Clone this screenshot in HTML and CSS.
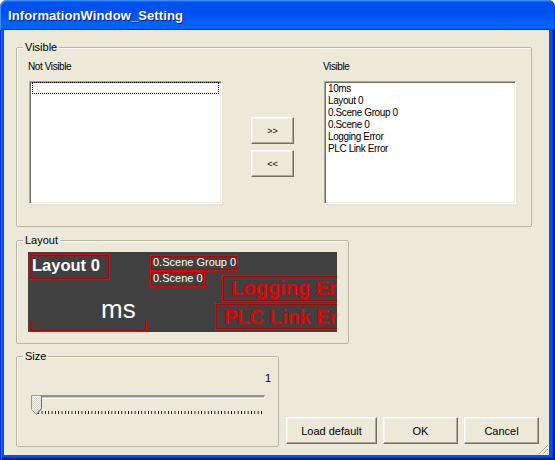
FILE: index.html
```html
<!DOCTYPE html>
<html>
<head>
<meta charset="utf-8">
<title>InformationWindow_Setting</title>
<link rel="stylesheet" href="styles.css">
</head>
<body>
<div class="window">
  <div class="titlebar"><span class="title">InformationWindow_Setting</span></div>
  <div class="frame">
    <div class="client">
      <div class="group g-visible">
        <span class="legend">Visible</span>
        <div class="lists">
          <div class="col col-left">
            <div class="label">Not Visible</div>
            <div class="listbox"><div class="focus-item"></div></div>
          </div>
          <div class="col col-btns">
            <button class="btn btn-move">&gt;&gt;</button>
            <button class="btn btn-move">&lt;&lt;</button>
          </div>
          <div class="col col-right">
            <div class="label">Visible</div>
            <div class="listbox">
              <div class="item">10ms</div>
              <div class="item">Layout 0</div>
              <div class="item">0.Scene Group 0</div>
              <div class="item">0.Scene 0</div>
              <div class="item">Logging Error</div>
              <div class="item">PLC Link Error</div>
            </div>
          </div>
        </div>
      </div>

      <div class="group g-layout">
        <span class="legend">Layout</span>
        <div class="preview">
          <div class="pv pv-layout">Layout 0</div>
          <div class="pv pv-group">0.Scene Group 0</div>
          <div class="pv pv-scene">0.Scene 0</div>
          <div class="pv pv-log">Logging Error</div>
          <div class="pv pv-plc">PLC Link Error</div>
          <div class="pv pv-msframe"></div>
          <div class="pv-ms">ms</div>
        </div>
      </div>

      <div class="bottom-row">
        <div class="group g-size">
          <span class="legend">Size</span>
          <div class="size-value">1</div>
          <div class="slider">
            <div class="track"></div>
            <svg class="ticks" width="228" height="4" viewBox="0 0 228 4" shape-rendering="crispEdges">
              <defs>
                <pattern id="tk" patternUnits="userSpaceOnUse" width="3.3235" height="4">
                  <rect x="0" y="0" width="1" height="3" fill="#000"/>
                </pattern>
              </defs>
              <rect x="0" y="0" width="228" height="4" fill="url(#tk)"/>
            </svg>
            <svg class="thumb" width="11" height="21" viewBox="0 0 11 21">
              <defs>
                <pattern id="dith" patternUnits="userSpaceOnUse" width="2" height="2">
                  <rect width="2" height="2" fill="#f3f2ec"/>
                  <rect width="1" height="1" fill="#d9d7cc"/>
                  <rect x="1" y="1" width="1" height="1" fill="#d9d7cc"/>
                </pattern>
              </defs>
              <path d="M0.5 0.5 H10.5 V13.5 L5.5 19.5 L0.5 14.5 Z" fill="url(#dith)" stroke="#9a988d"/>
              <path d="M10.5 1 V13.5 L5.5 19.5" fill="none" stroke="#6f6d63"/>
              <path d="M1.5 1.5 H9.5" stroke="#fff"/>
            </svg>
          </div>
        </div>
        <div class="actions">
          <button class="btn btn-load">Load default</button>
          <button class="btn btn-ok">OK</button>
          <button class="btn btn-cancel">Cancel</button>
        </div>
      </div>

      <svg class="grip" width="12" height="12" viewBox="0 0 12 12" shape-rendering="crispEdges">
        <path d="M11 2 L2 11 M11 6 L6 11 M11 10 L10 11" stroke="#aca899" stroke-width="1.4"/>
        <path d="M11 3 L3 11 M11 7 L7 11" stroke="#fff" stroke-width="1"/>
      </svg>
    </div>
  </div>
</div>
</body>
</html>
```

FILE: styles.css
```css
* { box-sizing: border-box; }

html, body {
  margin: 0;
  padding: 0;
  background: #ffffff;
}

body {
  font-family: "Liberation Sans", Arial, sans-serif;
  font-size: 11px;
  color: #000;
}

.window {
  width: 555px;
  height: 460px;
  display: flex;
  flex-direction: column;
}

.titlebar {
  flex: none;
  height: 30px;
  border-radius: 7px 7px 0 0;
  padding: 8px 0 0 8px;
  background: linear-gradient(180deg, #0997ff 0, #0053ee 8%, #0050ee 40%, #0066ff 86%, #0066ff 92%, #005bff 95%, #003dd7 97%, #003dd7 100%);
  box-shadow: inset 1px 1px 0 #3d8cf8, inset -1px 0 0 #0a3fc4;
}

.title {
  display: block;
  color: #fff;
  font-weight: bold;
  font-size: 13px;
  line-height: 15px;
  letter-spacing: 0.1px;
  text-shadow: 1px 1px 0 #0a1b87;
}

.frame {
  flex: 1;
  display: flex;
  padding: 0 6px 5px 4px;
  background: #0055e5;
  box-shadow: inset 1px 0 0 #0831d9, inset 2px 0 0 #166aee, inset -1px -1px 0 #00138c, inset -2px -2px 0 #001ea0, inset -3px -3px 0 #003bda;
}

.client {
  flex: 1;
  position: relative;
  background: #ece9d8;
  padding: 17px 0 0 12px;
  display: flex;
  flex-direction: column;
}

/* group boxes */
.group {
  position: relative;
  border: 1px solid #b9b6a5;
  border-radius: 2px;
  box-shadow: inset 1px 1px 0 #fbfaf6;
}

.legend {
  position: absolute;
  top: -7px;
  left: 6px;
  padding: 0 2px;
  background: #ece9d8;
  font-size: 11px;
  line-height: 13px;
}

.g-visible {
  width: 516px;
  height: 180px;
}

.lists {
  display: flex;
  padding: 12px 0 0 12px;
}

.col-left { width: 193px; }
.col-btns {
  width: 43px;
  margin-left: 29px;
  padding-top: 57px;
  display: flex;
  flex-direction: column;
  gap: 6px;
}
.col-right {
  width: 192px;
  margin-left: 30px;
}

.label {
  font-size: 10px;
  letter-spacing: -0.4px;
  line-height: 13px;
  height: 21px;
  margin-left: -1px;
}

.listbox {
  height: 123px;
  background: #fff;
  border: 1px solid;
  border-color: #aca899 #fff #fff #aca899;
  box-shadow: inset 1px 1px 0 #716f64, inset -1px -1px 0 #f1efe2;
  padding: 1px;
}

.focus-item {
  height: 12px;
  margin: -1px 1px 0 1px;
  border: 1px dotted #000;
}

.item {
  font-size: 10px;
  letter-spacing: -0.4px;
  line-height: 12px;
  padding-left: 2px;
  white-space: nowrap;
}

/* buttons */
.btn {
  font-family: "Liberation Sans", Arial, sans-serif;
  font-size: 11px;
  color: #000;
  background: #ece9d8;
  border: 1px solid;
  border-color: #ffffff #716f64 #716f64 #ffffff;
  box-shadow: inset -1px -1px 0 #aca899, inset 1px 1px 0 #f5f4ee;
  padding: 0;
  margin: 0;
  height: 27px;
}

.btn-move {
  width: 43px;
  font-size: 9px;
}

/* layout preview */
.g-layout {
  margin-top: 13px;
  width: 333px;
  height: 104px;
  padding: 11px 0 0 11px;
}

.preview {
  position: relative;
  width: 309px;
  height: 80px;
  background: #404040;
  overflow: hidden;
}

.pv {
  position: absolute;
  border: 1px solid #ee0000;
  box-shadow: inset 0 0 0 1px #b40000;
  white-space: nowrap;
  color: #fff;
}

.pv-layout {
  left: 1px;
  top: 2px;
  width: 81px;
  height: 26px;
  font-size: 16.5px;
  font-weight: bold;
  line-height: 19px;
  padding: 1px 0 0 2px;
}

.pv-group {
  left: 122px;
  top: 3px;
  width: 88px;
  height: 16px;
  font-size: 11px;
  line-height: 11px;
  padding: 1px 0 0 2px;
}

.pv-scene {
  left: 122px;
  top: 19px;
  width: 55px;
  height: 16px;
  font-size: 11px;
  line-height: 11px;
  padding: 1px 0 0 2px;
}

.pv-log {
  left: 194px;
  top: 23px;
  width: 160px;
  height: 27px;
  color: #e60000;
  font-size: 20px;
  font-weight: bold;
  line-height: 19px;
  padding: 3px 0 0 8px;
}

.pv-plc {
  left: 187px;
  top: 51px;
  width: 170px;
  height: 27px;
  color: #e60000;
  font-size: 20px;
  font-weight: bold;
  line-height: 19px;
  padding: 4px 0 0 8px;
}

.pv-msframe {
  left: 1px;
  top: 69px;
  width: 118px;
  height: 11px;
  border-top: none;
  box-shadow: inset 1px -1px 0 #b40000, inset -1px 0 0 #b40000;
}

.pv-ms {
  position: absolute;
  left: 73px;
  top: 42px;
  color: #fff;
  font-size: 26px;
  line-height: 30px;
}

/* bottom row */
.bottom-row {
  margin-top: 12px;
  display: flex;
  align-items: flex-end;
}

.g-size {
  width: 263px;
  height: 91px;
  padding: 15px 7px 0 14px;
}

.size-value {
  text-align: right;
  line-height: 13px;
}

.slider {
  position: relative;
  width: 240px;
  height: 27px;
  margin-top: 10px;
}

.track {
  margin: 7px 0 0 4px;
  width: 230px;
  height: 4px;
  border-top: 2px solid #94928a;
  border-left: 1px solid #94928a;
  border-bottom: 1px solid #ffffff;
  border-right: 1px solid #ffffff;
  background: #cfcdc2;
}

.ticks {
  display: block;
  margin: 12px 0 0 4px;
}

.thumb {
  position: absolute;
  left: 0;
  top: 0;
}

.actions {
  display: flex;
  margin: 0 0 3px 7px;
}

.btn-load { width: 91px; }
.btn-ok { width: 75px; margin-left: 6px; }
.btn-cancel { width: 75px; margin-left: 6px; }

.grip {
  position: absolute;
  right: 0;
  bottom: 0;
}
```
